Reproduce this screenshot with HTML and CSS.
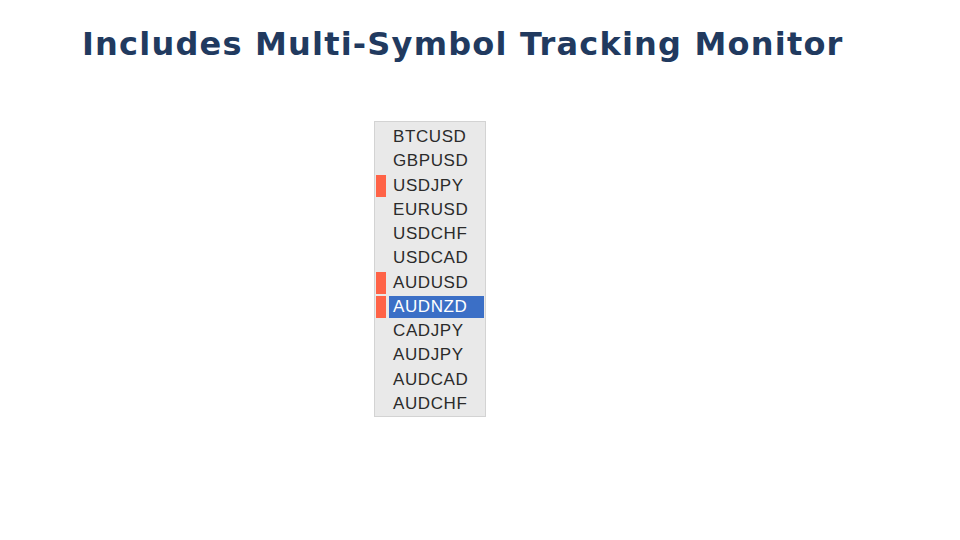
FILE: index.html
```html
<!DOCTYPE html>
<html lang="en">
<head>
<meta charset="utf-8">
<title>Multi-Symbol Tracking Monitor</title>
<link rel="stylesheet" href="styles.css">
</head>
<body>
  <main class="slide">
    <h1 class="slide-title">Includes Multi-Symbol Tracking Monitor</h1>
    <ul class="symbol-list">
      <li class="symbol"><span class="flag"></span><span class="name">BTCUSD</span></li>
      <li class="symbol"><span class="flag"></span><span class="name">GBPUSD</span></li>
      <li class="symbol is-alert"><span class="flag"></span><span class="name">USDJPY</span></li>
      <li class="symbol"><span class="flag"></span><span class="name">EURUSD</span></li>
      <li class="symbol"><span class="flag"></span><span class="name">USDCHF</span></li>
      <li class="symbol"><span class="flag"></span><span class="name">USDCAD</span></li>
      <li class="symbol is-alert"><span class="flag"></span><span class="name">AUDUSD</span></li>
      <li class="symbol is-alert is-selected"><span class="flag"></span><span class="name">AUDNZD</span></li>
      <li class="symbol"><span class="flag"></span><span class="name">CADJPY</span></li>
      <li class="symbol"><span class="flag"></span><span class="name">AUDJPY</span></li>
      <li class="symbol"><span class="flag"></span><span class="name">AUDCAD</span></li>
      <li class="symbol"><span class="flag"></span><span class="name">AUDCHF</span></li>
    </ul>
  </main>
</body>
</html>
```
FILE: styles.css
```css
html, body {
  margin: 0;
  padding: 0;
  background: #ffffff;
}

.slide {
  width: 960px;
  height: 540px;
  overflow: hidden;
  display: flex;
  flex-direction: column;
}

.slide-title {
  margin: 22px 0 0 82px;
  font-family: "DejaVu Sans", "Open Sans", sans-serif;
  font-weight: 700;
  font-size: 32px;
  letter-spacing: 1.2px;
  line-height: 44px;
  color: #213a5f;
  white-space: nowrap;
}

.symbol-list {
  list-style: none;
  margin: 55px 0 0 374px;
  padding: 3px 1px 0 1px;
  width: 108px;
  border: 1px solid #d3d3d3;
  background: #e9e9e9;
  display: flex;
  flex-direction: column;
}

.symbol {
  height: 24.25px;
  display: grid;
  grid-template-columns: 10px 95px;
  column-gap: 3px;
  align-items: center;
}

.flag,
.name {
  height: 22px;
}

.is-alert .flag {
  background: #ff6347;
}

.name {
  padding-left: 4px;
  font-family: "Liberation Sans", Arial, sans-serif;
  font-size: 17px;
  letter-spacing: 0.6px;
  line-height: 22px;
  color: #2b2b2b;
}

.is-selected .name {
  background: #3b6fc6;
  color: #ffffff;
}
```
